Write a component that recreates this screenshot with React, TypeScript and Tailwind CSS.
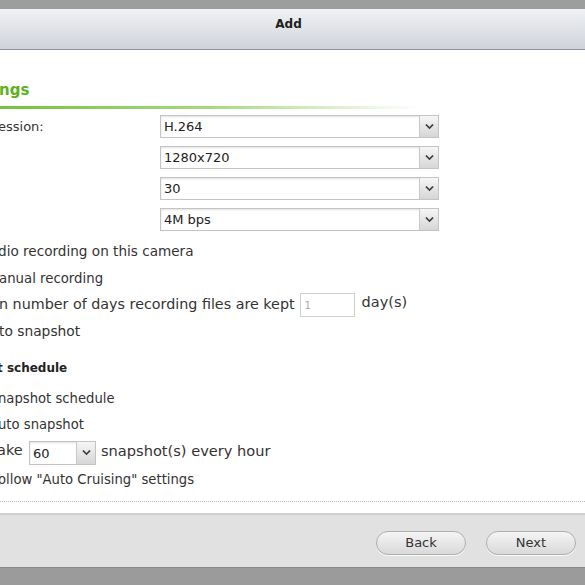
import React from "react";

const Chevron = () => (
  <svg width="9" height="6" viewBox="0 0 9 6">
    <path d="M0.3 1 L4.5 5.2 L8.7 1 L7.4 0 L4.5 2.9 L1.6 0 Z" fill="#3a3a3a" />
  </svg>
);

const Select = ({ value, className }: { value: string; className: string }) => (
  <div
    className={`flex items-stretch border border-[#c4c4c4] bg-white shadow-[inset_0_1px_2px_rgba(0,0,0,0.12)] ${className}`}
  >
    <div className="flex-1 flex items-center pl-[3px] text-[13px] text-[#222] leading-none">{value}</div>
    <div className="w-[19px] flex items-center justify-center border-l border-[#c8c8c8] bg-gradient-to-b from-[#f6f6f6] to-[#d6d6d6]">
      <Chevron />
    </div>
  </div>
);

export default function App() {
  return (
    <div
      className="w-[585px] h-[585px] overflow-hidden bg-white flex flex-col text-[#333]"
      style={{ fontFamily: '"DejaVu Sans", Verdana, sans-serif' }}
    >
      <div className="h-[9px] bg-[#9d9d9d]" />
      <div className="h-[41px] bg-gradient-to-b from-[#f1f2f4] to-[#cfd3da] border-b border-[#8e939a] flex items-center justify-center">
        <span className="text-[12px] font-bold text-[#1e1e1e] -mt-[10px] -ml-[8px]">Add</span>
      </div>

      <div className="flex-1 flex flex-col">
        <div className="mt-[31px] h-[18px] leading-[18px] text-[15px] font-bold text-[#5cb21c] -ml-[1px]">ngs</div>
        <div className="mt-[7px] h-[3px] w-[420px] bg-gradient-to-r from-[#74c23a] via-[#a6d97f] to-transparent" />

        <div className="mt-[6px] flex flex-col gap-[8px]">
          <div className="flex items-center h-[23px]">
            <span className="w-[160px] text-[13px] -ml-[2px]">ession:</span>
            <Select value="H.264" className="w-[279px] h-[23px] ml-[2px]" />
          </div>
          <div className="flex items-center h-[23px] pl-[160px]">
            <Select value="1280x720" className="w-[279px] h-[23px]" />
          </div>
          <div className="flex items-center h-[23px] pl-[160px]">
            <Select value="30" className="w-[279px] h-[23px]" />
          </div>
          <div className="flex items-center h-[23px] pl-[160px]">
            <Select value="4M bps" className="w-[279px] h-[23px]" />
          </div>
        </div>

        <div className="mt-[7px] flex flex-col text-[13px]">
          <div className="h-[27px] flex items-center -ml-[2px] text-[13.6px]">dio recording on this camera</div>
          <div className="h-[27px] flex items-center -ml-[1px] text-[13.3px]">anual recording</div>
          <div className="h-[26px] flex items-center -ml-[1px]">
            <span className="text-[14.3px]">n number of days recording files are kept</span>
            <div className="ml-[5px] w-[55px] h-[24px] border border-[#cfcfcf] bg-white flex items-center pl-[4px] text-[10px] text-[#aaa]">
              1
            </div>
            <span className="ml-[7px] text-[14.5px] -mt-[4px]">day(s)</span>
          </div>
          <div className="h-[27px] flex items-center -ml-[1px] text-[13.8px]">to snapshot</div>
        </div>

        <div className="mt-[10px] h-[26px] flex items-center text-[12px] font-bold text-[#222] -ml-[3px]">t schedule</div>

        <div className="mt-[5px] flex flex-col text-[13.2px]">
          <div className="h-[26px] flex items-center -ml-[2px]">napshot schedule</div>
          <div className="h-[26px] flex items-center -ml-[2px]">uto snapshot</div>
          <div className="h-[26px] flex items-center">
            <span className="text-[14.5px] -ml-[3px] w-[32px]">ake</span>
            <Select value="60" className="w-[67px] h-[24px] mt-[4px]" />
            <span className="ml-[5px] text-[14.6px]">snapshot(s) every hour</span>
          </div>
          <div className="mt-[3px] h-[26px] flex items-center -ml-[2px]">ollow "Auto Cruising" settings</div>
        </div>

        <div className="mt-[8px] border-t border-dotted border-[#b8b8b8]" />
      </div>

      <div className="h-[54px] bg-[#e1e1e1] border-t-2 border-[#cfcfcf] flex items-center justify-end pr-[9px] gap-[20px]">
        <button className="w-[90px] h-[24px] mt-[4px] rounded-full border border-[#aeaeae] bg-gradient-to-b from-[#f5f5f5] to-[#d9d9d9] text-[13px] text-[#333] shadow-[0_1px_0_rgba(255,255,255,0.8)]">
          Back
        </button>
        <button className="w-[90px] h-[24px] mt-[4px] rounded-full border border-[#aeaeae] bg-gradient-to-b from-[#f5f5f5] to-[#d9d9d9] text-[13px] text-[#333] shadow-[0_1px_0_rgba(255,255,255,0.8)]">
          Next
        </button>
      </div>
      <div className="h-[18px] bg-[#9b9b9b] border-t border-[#888]" />
    </div>
  );
}
